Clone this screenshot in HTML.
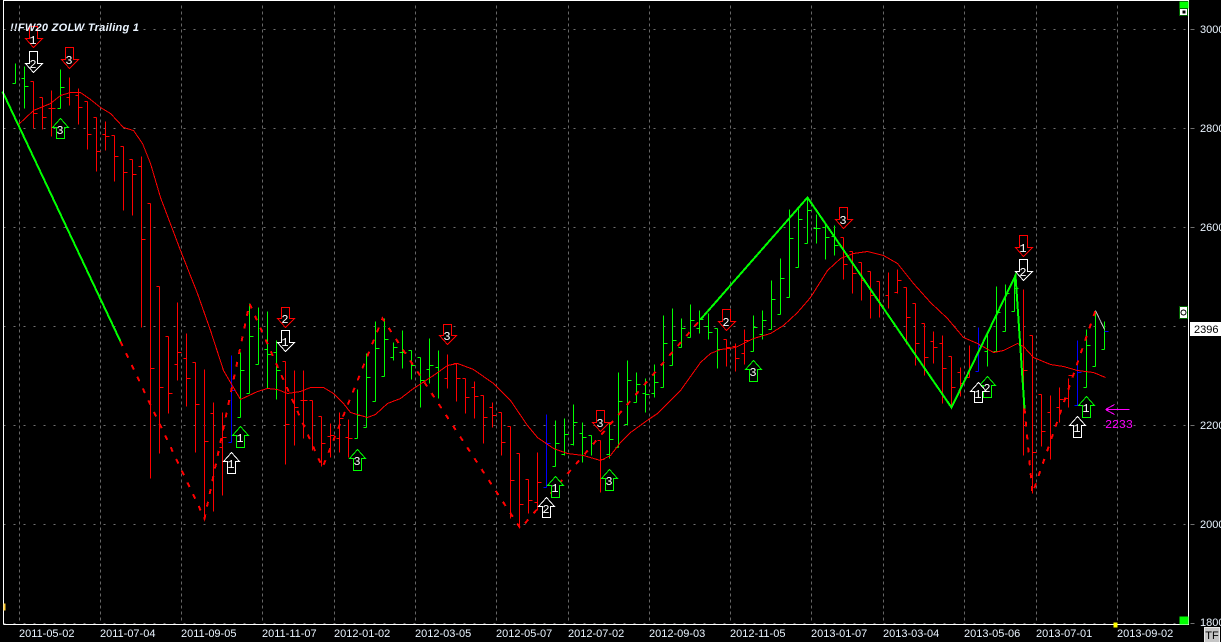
<!DOCTYPE html>
<html>
<head>
<meta charset="utf-8">
<title>FW20 ZOLW Trailing 1</title>
<style>
html,body{margin:0;padding:0;background:#fff;width:1223px;height:642px;overflow:hidden}
svg{display:block}
text{font-family:"Liberation Sans",Arial,sans-serif}
.ax{font-size:11px;fill:#eaf4ff}
.dg{font-family:"Liberation Mono",monospace;font-size:12px;fill:#fff;text-anchor:middle}
</style>
</head>
<body>
<svg width="1223" height="642" viewBox="0 0 1223 642" xmlns="http://www.w3.org/2000/svg">
<rect x="0" y="0" width="1221" height="642" fill="#000"/>
<rect x="1221" y="0" width="2" height="642" fill="#fff"/>

<g transform="translate(.5 .5)" shape-rendering="crispEdges" fill="none">
<!-- grid -->
<path stroke="#707070" stroke-dasharray="2 8" d="M3 29H1188M3 128H1188M3 227H1188M3 326H1188M3 425H1188M3 524H1188M3 623H1188"/>
<path stroke="#707070" d="M1190 29H1194M1190 128H1194M1190 227H1194M1190 326H1194M1190 425H1194M1190 524H1194M1190 623H1194"/>
<path stroke="#666" stroke-dasharray="3 3" d="M19 5V623M100 5V623M181 5V623M262 5V623M334 5V623M415 5V623M496 5V623M568 5V623M649 5V623M730 5V623M811 5V623M883 5V623M964 5V623M1036 5V623M1117 5V623"/>

<!-- red bars -->
<path stroke="#ff0000" d="M33 81V128M30 81H33M33 113H37
M42 97V129M39 97H42M42 117H46
M51 90V136M48 108H51M51 108H55
M69 77V105M66 97H69M69 92H73
M78 88V124M75 95H78M78 107H82
M87 101V149M84 101H87M87 134H91
M96 117V171M93 117H96M96 151H100
M105 121V150M102 134H105M105 136H109
M114 135V181M111 135H114M114 156H118
M123 146V210M120 146H123M123 172H127
M132 159V215M129 159H132M132 174H136
M141 156V327M138 166H141M141 239H145
M150 203V478M147 203H150M150 368H154
M159 286V453M156 286H159M159 387H163
M168 336V413M165 336H168M168 393H172
M177 302V380M174 364H177M177 352H181
M186 333V406M183 358H186M186 378H190
M195 362V452M192 362H195M195 404H199
M204 369V517M204 441H208
M213 402V511M210 413H213
M222 412V495M219 447H222M222 437H226
M285 361V464M282 361H285M285 424H289
M294 370V445M294 407H298
M303 370V438M300 400H303M303 400H307
M312 400V450M309 400H312
M321 416V466M318 416H321M321 443H325
M330 423V457M327 436H330M330 435H334
M339 412V452M336 438H339M339 418H343
M348 419V457M345 437H348M348 438H352
M447 354V388M444 378H447
M456 363V401M453 363H456M456 378H460
M465 378V413M462 378H465M465 397H469
M474 381V418M471 387H474M474 396H478
M483 395V443M480 395H483M483 417H487
M492 402V427M489 407H492M492 415H496
M501 412V455M498 412H501M501 442H505
M510 426V518M507 426H510M510 480H514
M519 453V528M516 453H519M519 504H523
M528 479V513M525 479H528M528 500H532
M537 452V510M534 502H537M537 482H541
M600 440V492M597 440H600M600 459H604
M726 339V366M723 339H726M726 347H730
M735 343V371M732 346H735M735 358H739
M744 329V364M741 353H744M744 340H748
M843 237V279M840 237H843M843 264H847
M852 251V293M849 251H852M852 273H856
M861 262V300M858 262H861M861 280H865
M870 271V318M867 271H870M870 295H874
M879 281V317M876 281H879M879 305H883
M888 272V308M885 295H888
M897 269V293M894 292H897M897 280H901
M906 287V344M903 287H906M906 317H910
M915 303V365M912 303H915M915 343H919
M924 323V375M921 323H924M924 357H928
M933 331V363M930 341H933M933 347H937
M942 335V403M939 343H942M942 368H946
M951 356V407M948 356H951M951 387H955
M960 367V396M957 372H960M960 383H964
M969 345V377M966 377H969
M1023 289V455M1023 370H1027
M1032 335V493M1029 335H1032M1032 452H1036
M1041 394V446M1038 394H1041M1041 431H1045
M1050 395V459M1047 412H1050
M1059 387V422M1056 407H1059M1059 399H1063
M1068 378V407M1065 398H1068M1068 375H1072"/>

<!-- green bars -->
<path stroke="#00ff00" d="M15 63V83M12 83H15
M24 66V108M21 78H24M24 86H28
M60 69V108M57 108H60M60 87H64
M240 352V417M237 417H240M240 370H244
M249 303V393M246 393H249M249 336H253
M258 307V364M255 364H258
M267 311V388M264 349H267M267 354H271
M276 340V399M273 352H276M276 370H280
M357 389V438M354 438H357M357 415H361
M366 353V427M363 427H366M366 377H370
M375 321V401M372 401H375M375 348H379
M384 318V376M381 376H384M384 339H388
M393 342V360M390 357H393M393 347H397
M402 330V368M399 352H402M402 352H406
M411 350V379M408 350H411M411 365H415
M420 357V407M417 357H420M420 380H424
M429 338V383M426 369H429M429 365H433
M438 350V398M435 367H438
M555 420V466M552 466H555M555 443H559
M564 418V455M561 454H564M564 434H568
M573 404V445M570 444H573M573 422H577
M582 422V462M579 433H582M582 437H586
M591 435V455M588 435H591
M609 422V458M606 454H609M609 439H613
M618 372V447M615 447H618M618 401H622
M627 360V425M624 424H627M627 380H631
M636 372V402M633 402H636M636 384H640
M645 378V412M642 393H645M645 394H649
M654 364V397M651 393H654M654 382H658
M663 315V387M660 387H663M663 343H667
M672 308V365M669 365H672M672 340H676
M681 318V347M678 347H681M681 328H685
M690 304V337M687 337H690M690 320H694
M699 310V333M696 328H699M699 319H703
M708 313V339M705 326H708M708 332H712
M717 328V368M714 328H717M717 349H721
M753 315V351M750 351H753M753 327H757
M762 310V339M759 334H762M762 320H766
M771 280V329M768 329H771M771 299H775
M780 258V314M777 314H780M780 278H784
M789 209V297M786 297H789M789 238H793
M798 207V267M795 267H798M798 219H802
M807 197V243M804 243H807M807 210H811
M816 214V243M813 228H816M816 228H820
M825 222V259M822 227H825M825 237H829
M834 225V255M831 236H834M834 245H838
M987 333V366M984 351H987
M996 286V351M993 351H996M996 312H1000
M1005 284V331M1002 331H1005M1005 293H1009
M1014 275V311M1011 311H1014M1014 288H1018
M1086 329V387M1083 387H1086M1086 345H1090
M1095 310V366M1092 366H1095
M1104 321V349M1101 349H1104"/>

<!-- blue bars -->
<path stroke="#0000ff" d="M231 355V442M228 442H231M231 390H235
M546 414V487M543 487H546M546 443H550
M978 327V371M975 371H978M978 345H982
M1077 340V405M1074 405H1077M1077 372H1081
M1104 331H1108"/>

<!-- moving average -->
<polyline stroke="#ff0000" points="17,125 33,110 50,103 60,95 70,92 80,92 90,99 100,107 110,113 123,127 133,130 142,143 150,163 160,197 180,250 197,293 210,330 223,370 240,399 257,391 267,388 277,389 287,393 300,391 310,387 323,387 333,393 343,403 350,412 367,417 375,414 387,403 400,398 413,388 433,375 447,365 457,363 473,369 493,383 510,400 527,425 537,437 553,448 567,453 583,455 600,460 610,455 620,442 630,432 648,419 657,413 680,390 700,362 710,353 720,349 735,347 753,338 770,333 783,325 797,312 810,297 827,270 840,258 853,253 867,251 883,255 897,263 913,283 930,302 947,318 963,337 977,343 993,352 1003,350 1017,343 1023,346 1033,357 1050,364 1063,366 1077,370 1093,372 1105,377"/>

<!-- zigzag -->
<polyline stroke="#00ff00" stroke-width="2" points="2,91 120,341"/>
<polyline stroke="#ff0000" stroke-width="2" stroke-dasharray="5 8" points="120,341 204,518 249,303 322,467 382,318 520,528 700,319"/>
<polyline stroke="#00ff00" stroke-width="2" points="700,319 807,197 951,407 1015,275 1024,408"/>
<polyline stroke="#ff0000" stroke-width="2" stroke-dasharray="5 8" points="1024,408 1032,493 1095,310"/>
<polyline stroke="#c0c0c0" points="1095,310 1104,329"/>

<!-- frame -->
<path stroke="#fff" d="M3 624V0H1188V624H3"/>

<!-- markers: down arrows -->
<g fill="#000" stroke="#ff0000">
<polygon points="29,26 37,26 37,38 42,38 33,47 25,38 29,38"/>
<polygon points="65,47 73,47 73,59 78,59 69,68 61,59 65,59"/>
<polygon points="281,307 289,307 289,318 294,318 285,327 277,318 281,318"/>
<polygon points="443,324 451,324 451,335 456,335 447,344 439,335 443,335"/>
<polygon points="596,410 604,410 604,422 609,422 600,431 592,422 596,422"/>
<polygon points="722,309 730,309 730,321 735,321 726,330 718,321 722,321"/>
<polygon points="839,207 847,207 847,219 852,219 843,228 835,219 839,219"/>
<polygon points="1019,235 1027,235 1027,247 1032,247 1023,256 1015,247 1019,247"/>
</g>
<g fill="#000" stroke="#fff">
<polygon points="29,51 37,51 37,63 42,63 33,72 25,63 29,63"/>
<polygon points="281,330 289,330 289,342 294,342 285,351 277,342 281,342"/>
<polygon points="1019,259 1027,259 1027,271 1032,271 1023,280 1015,271 1019,271"/>
</g>
<!-- markers: up arrows -->
<g fill="#000" stroke="#00ff00">
<polygon points="60,118 68,127 64,127 64,138 56,138 56,127 52,127"/>
<polygon points="240,426 248,435 244,435 244,447 236,447 236,435 232,435"/>
<polygon points="357,449 365,458 361,458 361,470 353,470 353,458 349,458"/>
<polygon points="555,476 563,485 559,485 559,497 551,497 551,485 547,485"/>
<polygon points="609,469 617,478 613,478 613,490 605,490 605,478 601,478"/>
<polygon points="753,360 761,369 757,369 757,381 749,381 749,369 745,369"/>
<polygon points="987,376 995,385 991,385 991,397 983,397 983,385 979,385"/>
<polygon points="1086,396 1094,405 1090,405 1090,417 1082,417 1082,405 1078,405"/>
</g>
<g fill="#000" stroke="#fff">
<polygon points="231,452 239,461 235,461 235,473 227,473 227,461 223,461"/>
<polygon points="546,497 554,506 550,506 550,517 542,517 542,506 538,506"/>
<polygon points="978,382 986,391 982,391 982,402 974,402 974,391 970,391"/>
<polygon points="1077,416 1085,425 1081,425 1081,437 1073,437 1073,425 1069,425"/>
</g>

<!-- magenta target arrow -->
<path stroke="#ff00ff" d="M1105 409H1129M1105 409L1114 404M1105 409L1114 414"/>

<!-- scale markers -->
<rect x="1179" y="1" width="9" height="7" fill="#00ff00" stroke="none"/>
<rect x="1179" y="8" width="8" height="7" fill="#fff" stroke="#006400"/>
<rect x="1182" y="10" width="3" height="3" fill="#000" stroke="none"/>
<rect x="1179" y="306" width="8" height="12" fill="#fff" stroke="#006400"/>
<ellipse cx="1183" cy="312" rx="2.5" ry="2.5" stroke="#000" fill="#fff"/>
<rect x="1179" y="616" width="9" height="8" fill="#00ff00" stroke="none"/>
<rect x="1113" y="622" width="4" height="5" fill="#ffff00" stroke="none"/>
<rect x="3" y="603" width="2" height="7" fill="#ffcc33" stroke="none"/>
</g>

<!-- 2396 label -->
<rect x="1190" y="322" width="31" height="14" fill="#fff"/>

<!-- digits in markers -->
<text class="dg" x="33" y="44">1</text>
<text class="dg" x="33" y="68">2</text>
<text class="dg" x="69" y="64">3</text>
<text class="dg" x="285" y="323">2</text>
<text class="dg" x="285" y="346">1</text>
<text class="dg" x="447" y="340">3</text>
<text class="dg" x="600" y="427">3</text>
<text class="dg" x="726" y="326">2</text>
<text class="dg" x="843" y="224">3</text>
<text class="dg" x="1023" y="252">1</text>
<text class="dg" x="1023" y="276">2</text>
<text class="dg" x="60" y="134">3</text>
<text class="dg" x="240" y="442">1</text>
<text class="dg" x="231" y="468">1</text>
<text class="dg" x="357" y="465">3</text>
<text class="dg" x="555" y="492">1</text>
<text class="dg" x="546" y="513">2</text>
<text class="dg" x="609" y="485">3</text>
<text class="dg" x="753" y="376">3</text>
<text class="dg" x="987" y="392">2</text>
<text class="dg" x="978" y="398">1</text>
<text class="dg" x="1077" y="432">1</text>
<text class="dg" x="1086" y="412">1</text>

<text x="1105" y="428" font-size="12" fill="#ff00ff" style="font-family:'Liberation Mono',monospace" letter-spacing="-.3">2233</text>

<!-- title -->
<text x="10" y="31" font-size="11" font-weight="bold" font-style="italic" fill="#eaf4ff" textLength="129" lengthAdjust="spacing">!!FW20 ZOLW Trailing 1</text>

<!-- axes labels -->
<text class="ax" x="19" y="637">2011-05-02</text>
<text class="ax" x="100" y="637">2011-07-04</text>
<text class="ax" x="181" y="637">2011-09-05</text>
<text class="ax" x="262" y="637">2011-11-07</text>
<text class="ax" x="334" y="637">2012-01-02</text>
<text class="ax" x="415" y="637">2012-03-05</text>
<text class="ax" x="496" y="637">2012-05-07</text>
<text class="ax" x="568" y="637">2012-07-02</text>
<text class="ax" x="649" y="637">2012-09-03</text>
<text class="ax" x="730" y="637">2012-11-05</text>
<text class="ax" x="811" y="637">2013-01-07</text>
<text class="ax" x="883" y="637">2013-03-04</text>
<text class="ax" x="964" y="637">2013-05-06</text>
<text class="ax" x="1036" y="637">2013-07-01</text>
<text class="ax" x="1117" y="637">2013-09-02</text>
<svg x="1195" y="0" width="26" height="642">
<text class="ax" x="5" y="33">3000</text>
<text class="ax" x="5" y="132">2800</text>
<text class="ax" x="5" y="231">2600</text>
<text class="ax" x="5" y="429">2200</text>
<text class="ax" x="5" y="528">2000</text>
<text class="ax" x="5" y="626">1800</text>
</svg>
<rect x="1204.5" y="627.5" width="15" height="15" fill="#c4c4c4" stroke="#e8e8e8"/>
<text x="1212" y="639" font-size="11" fill="#000" text-anchor="middle">TF</text>
<text x="1194" y="333" font-size="11" fill="#000">2396</text>
</svg>
</body>
</html>
